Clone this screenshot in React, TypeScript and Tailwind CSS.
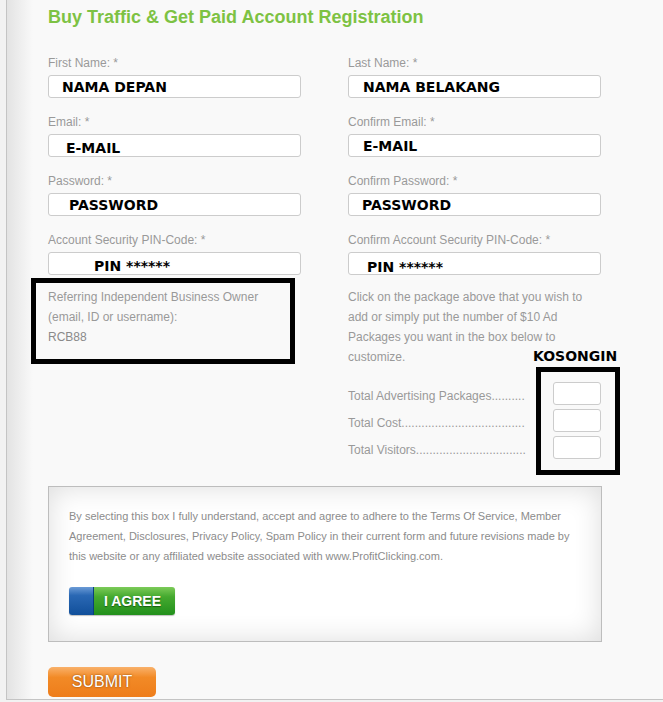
import React from 'react'

const fieldRows = [
  [
    { label: 'First Name: *', value: 'NAMA DEPAN', pad: 'pl-[13px] pt-0' },
    { label: 'Last Name: *', value: 'NAMA BELAKANG', pad: 'pl-[14px] pt-0' },
  ],
  [
    { label: 'Email: *', value: 'E-MAIL', pad: 'pl-[17px] pt-[4px]' },
    { label: 'Confirm Email: *', value: 'E-MAIL', pad: 'pl-[14px] pt-[1px]' },
  ],
  [
    { label: 'Password: *', value: 'PASSWORD', pad: 'pl-[20px] pt-[1px]' },
    { label: 'Confirm Password: *', value: 'PASSWORD', pad: 'pl-[13px] pt-[1px]' },
  ],
  [
    { label: 'Account Security PIN-Code: *', value: 'PIN ******', pad: 'pl-[45px] pt-[5px]' },
    { label: 'Confirm Account Security PIN-Code: *', value: 'PIN ******', pad: 'pl-[18px] pt-[6px]' },
  ],
]

const totals = [
  'Total Advertising Packages..........',
  'Total Cost.....................................',
  'Total Visitors.................................',
]

const blurb = [
  'Click on the package above that you wish to',
  'add or simply put the number of $10 Ad',
  'Packages you want in the box below to',
  'customize.',
]

function Field({ label, value, pad }: { label: string; value: string; pad: string }) {
  return (
    <div>
      <div className="mb-[5px] text-[12px] leading-[14px] text-[#999999]">{label}</div>
      <div
        className={`flex h-[23px] items-center rounded-[3px] border border-[#cccccc] bg-white font-['DejaVu_Sans',sans-serif] text-[14px] font-bold leading-[16px] text-black ${pad}`}
      >
        {value}
      </div>
    </div>
  )
}

export default function App() {
  return (
    <div className="h-[702px] w-[663px] overflow-hidden bg-[#f2f2f2] font-['Liberation_Sans',Arial,sans-serif]">
      <div className="ml-[6px] h-[700px] border-b border-l border-[#c4c4c4] bg-[linear-gradient(to_right,#e3e3e3,#f9f9f9_26px)] pl-[41px] pt-[6px]">
        <h1 className="text-[18px] font-bold leading-[22px] text-[#7dc243]">
          Buy Traffic &amp; Get Paid Account Registration
        </h1>

        <div className="mt-[28px] grid w-[553px] grid-cols-[253px_253px] gap-x-[47px] gap-y-[17px]">
          {fieldRows.flat().map((f, i) => (
            <Field key={i} {...f} />
          ))}
        </div>

        <div className="mt-[3px] grid w-[553px] grid-cols-[253px_253px] gap-x-[47px]">
          <div className="-ml-[17px] h-[86px] w-[264px] self-start border-[5px] border-black pl-[12px] pt-[4px] text-[12px] leading-[20px] text-[#999999]">
            <div>Referring Independent Business Owner</div>
            <div>(email, ID or username):</div>
            <div className="text-[#8a8a8a]">RCB88</div>
          </div>

          <div className="pt-[9px] text-[12px] text-[#999999]">
            <div className="leading-[20px]">
              {blurb.map((l) => (
                <div key={l} className="whitespace-nowrap">
                  {l}
                </div>
              ))}
            </div>
            <div className="flex items-start">
              <div className="mt-[15px] flex w-[177px] shrink-0 flex-col gap-[4px]">
                {totals.map((t) => (
                  <div key={t} className="h-[23px] whitespace-nowrap pt-[7px] leading-[14px]">
                    {t}
                  </div>
                ))}
              </div>
              <div className="relative ml-[11px] flex w-[84px] shrink-0 flex-col gap-[4px] border-[5px] border-black pb-[11px] pl-[12px] pt-[10px]">
                <span className="absolute -top-[24px] -left-[8px] whitespace-nowrap font-['DejaVu_Sans',sans-serif] text-[14px] font-bold leading-[16px] text-black">
                  KOSONGIN
                </span>
                {totals.map((t) => (
                  <div key={t} className="h-[23px] w-[48px] rounded-[3px] border border-[#cccccc] bg-white" />
                ))}
              </div>
            </div>
          </div>
        </div>

        <div className="mt-[11px] w-[554px] border border-[#bdbdbd] bg-white pb-[26px] pl-[20px] pt-[19px] shadow-[inset_0_0_28px_rgba(0,0,0,0.14)]">
          <p className="text-[11px] leading-[20px] text-[#8c8c8c]">
            By selecting this box I fully understand, accept and agree to adhere to the Terms Of Service, Member
            <br />
            Agreement, Disclosures, Privacy Policy, Spam Policy in their current form and future revisions made by
            <br />
            this website or any affiliated website associated with www.ProfitClicking.com.
          </p>
          <button className="mt-[21px] flex h-[28px] w-[106px] overflow-hidden rounded-[3px] shadow-[0_1px_1px_rgba(0,0,0,0.25)]">
            <span className="h-full w-[25px] border-r border-[#0b3f7c] bg-[linear-gradient(to_bottom,#6b9bd6_0%,#2a68b4_30%,#114f9a_100%)]" />
            <span className="flex h-full flex-1 items-center pl-[10px] text-[14px] font-bold text-white [text-shadow:0_1px_1px_#185c12] bg-[linear-gradient(to_bottom,#7ccb58_0%,#45a92f_35%,#22901c_100%)]">
              I AGREE
            </span>
          </button>
        </div>

        <button className="mt-[25px] flex h-[30px] w-[108px] items-center justify-center rounded-[5px] bg-[linear-gradient(to_bottom,#f9b16a_0%,#f28a26_35%,#ee7d1b_100%)] text-[16px] text-white [text-shadow:0_0_2px_#7a3b00]">
          SUBMIT
        </button>
      </div>
    </div>
  )
}
